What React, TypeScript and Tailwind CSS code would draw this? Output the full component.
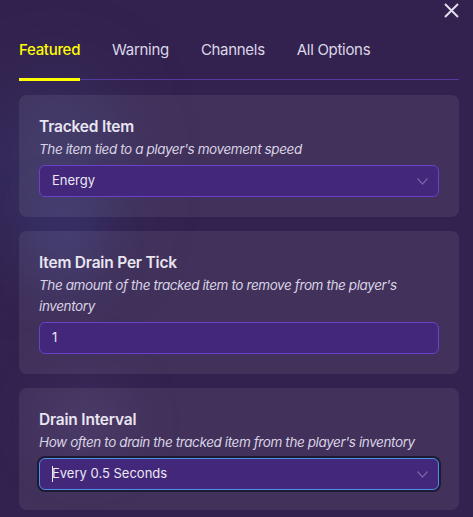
import React from 'react';

const tabs = ['Featured', 'Warning', 'Channels', 'All Options'];

const Chevron = () => (
  <svg width="11" height="7" viewBox="0 0 11 7" fill="none" className="text-[#7a62a8]">
    <path d="M0.5 0.5l5 5.5l5-5.5" stroke="currentColor" strokeWidth="1.2" />
  </svg>
);

const Card: React.FC<{ title: string; desc: string; children: React.ReactNode }> = ({ title, desc, children }) => (
  <div className="rounded-lg bg-white/[0.07] px-5 pt-5 pb-5">
    <h3 className="text-[15.5px] leading-6 font-semibold tracking-[-0.2px] text-[#e9e5f1]">{title}</h3>
    <p className="text-[13.5px] leading-[21px] italic tracking-[-0.4px] text-[#d9d3e4]">{desc}</p>
    <div className="mt-[5px]">{children}</div>
  </div>
);

export default function App() {
  return (
    <div className="relative min-h-[517px] overflow-hidden bg-[#33224f] pl-[19px] pr-[14px] pb-2 font-['Inter',sans-serif]">
      {/* background glow */}
      <div className="pointer-events-none absolute left-[0px] top-[80px] h-[180px] w-[110px] rounded-full bg-[#3a3d78]/50 blur-2xl" />
      <div className="pointer-events-none absolute left-[40px] top-[200px] h-[90px] w-[50px] rounded-full bg-[#3b3f82]/40 blur-xl" />
      <div className="pointer-events-none absolute left-[40px] top-[380px] h-[80px] w-[90px] rounded-full bg-[#4a3a6e]/40 blur-xl" />

      <button className="absolute right-[13px] top-[2px] text-[#e2deeb]" aria-label="Close">
        <svg width="17" height="17" viewBox="0 0 17 17" fill="none">
          <path d="M2 2l13 13M15 2L2 15" stroke="currentColor" strokeWidth="2" />
        </svg>
      </button>

      <div className="relative pt-[38px]">
        <div className="flex gap-8 border-b border-[#5639a0]">
          {tabs.map((t, i) => (
            <div
              key={t}
              className={`-mb-[2px] pb-[16px] text-[15px] leading-6 tracking-[-0.3px] ${
                i === 0 ? 'border-b-[3px] border-[#ffff00] font-medium text-[#ffff00]' : 'border-b-[3px] border-transparent text-[#dcd7e8]'
              }`}
            >
              {t}
            </div>
          ))}
        </div>
      </div>

      <div className="relative mt-[15px] flex flex-col gap-[14px]">
        <Card title="Tracked Item" desc="The item tied to a player's movement speed">
          <div className="flex h-8 items-center justify-between rounded-md border border-[#6a41c8] bg-[#42277a] pl-3 pr-[10px] text-[13px] text-[#ebe7f3]">
            <span>Energy</span>
            <Chevron />
          </div>
        </Card>

        <Card title="Item Drain Per Tick" desc="The amount of the tracked item to remove from the player's inventory">
          <div className="flex h-8 items-center rounded-md border border-[#6a41c8] bg-[#42277a] px-3 text-[13px] text-[#ebe7f3]">
            1
          </div>
        </Card>

        <Card title="Drain Interval" desc="How often to drain the tracked item from the player's inventory">
          <div className="flex h-8 items-center justify-between rounded-md border-[1.5px] border-[#4c8fe6] bg-[#42277a] pl-3 pr-[10px] text-[13px] text-[#ebe7f3] ring-2 ring-[#1f1a33]">
            <span className="flex items-center">
              <span className="mr-[-1px] inline-block h-[16px] w-[1px] bg-[#ebe7f3]" />
              Every 0.5 Seconds
            </span>
            <Chevron />
          </div>
        </Card>
      </div>
    </div>
  );
}
